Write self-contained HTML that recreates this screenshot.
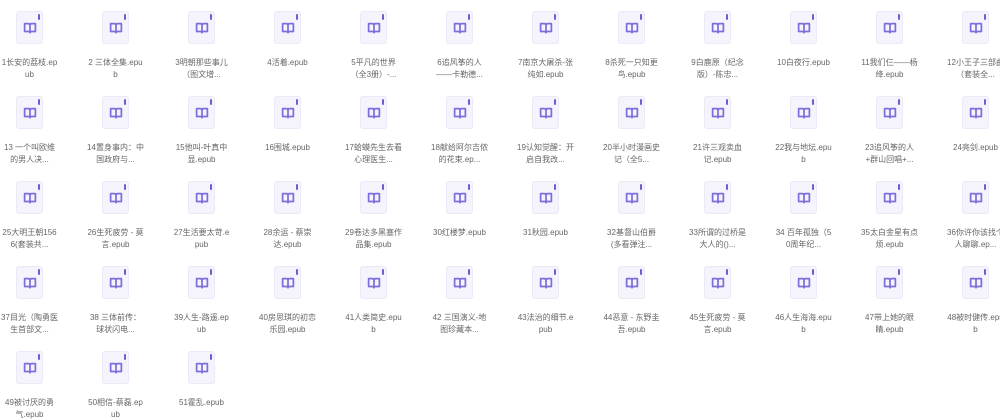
<!DOCTYPE html>
<html><head><meta charset="utf-8"><style>
body{margin:0;width:1000px;height:414px;background:#fff;overflow:hidden;position:relative;font-family:"Liberation Sans","Noto Sans CJK SC",sans-serif}
.c{position:absolute;width:80px}
.i{position:absolute;left:27px;top:0;width:27px;height:33px;background:#f5f4fd;border:1px solid #ebe9f7;border-radius:3px;box-sizing:border-box}
.i:after{content:"";position:absolute;right:2px;top:2px;width:2px;height:6px;background:#6a5fd0;border-radius:1px}
.i svg{position:absolute;left:6px;top:10px}
.t{position:absolute;top:46px;left:12px;width:57px;text-align:center;font-size:8px;line-height:11.5px;color:#666;word-break:break-all}
</style></head><body>
<script>
var n=["1长安的荔枝.epub","2 三体全集.epub","3明朝那些事儿（图文增...","4活着.epub","5平凡的世界（全3册）-...","6追风筝的人——卡勒德...","7南京大屠杀-张纯如.epub","8杀死一只知更鸟.epub","9白鹿原（纪念版）-陈忠...","10白夜行.epub","11我们仨——杨绛.epub","12小王子三部曲（套装全...",
"13 一个叫欧维的男人决...","14置身事内：中国政府与...","15他叫-叶真中显.epub","16围城.epub","17蛤蟆先生去看心理医生...","18献给阿尔吉侬的花束.ep...","19认知觉醒：开启自我改...","20半小时漫画史记（全5...","21许三观卖血记.epub","22我与地坛.epub","23追风筝的人+群山回唱+...","24亮剑.epub",
"25大明王朝1566(套装共...","26生死疲劳 - 莫言.epub","27生活要太苛.epub","28余运 - 蔡崇达.epub","29卷达多黑塞作品集.epub","30红楼梦.epub","31秋园.epub","32基督山伯爵(多看弹注...","33所谓的过桥是大人的()...","34 百年孤独（50周年纪...","35太白金星有点烦.epub","36你许你该找个人聊聊.ep...",
"37目光（陶勇医生首部文...","38 三体前传：球状闪电...","39人生-路遥.epub","40房思琪的初恋乐园.epub","41人类简史.epub","42 三国演义-地图珍藏本...","43法治的细节.epub","44恶意 - 东野圭吾.epub","45生死疲劳 - 莫言.epub","46人生海海.epub","47带上她的眼睛.epub","48被时健传.epub",
"49被讨厌的勇气.epub","50相信-蔡磊.epub","51霍乱.epub"];
var s='<svg width="14" height="13" viewBox="0 0 13 12"><path d="M1.5 1.5h3.5c.9 0 1.5.6 1.5 1.5v7c0-.7-.6-1.2-1.3-1.2H1.5zM11.5 1.5H8c-.9 0-1.5.6-1.5 1.5v7c0-.7.6-1.2 1.3-1.2h3.7z" fill="none" stroke="#7b6fdc" stroke-width="1.6" stroke-linejoin="round"/></svg>';
var h="";
n.forEach(function(x,k){var c=k%12,r=Math.floor(k/12);h+='<div class="c" style="left:'+(-11+c*86)+'px;top:'+(11+r*85)+'px"><div class="i">'+s+'</div><div class="t">'+x+'</div></div>';});
document.write(h);
</script>
</body></html>
